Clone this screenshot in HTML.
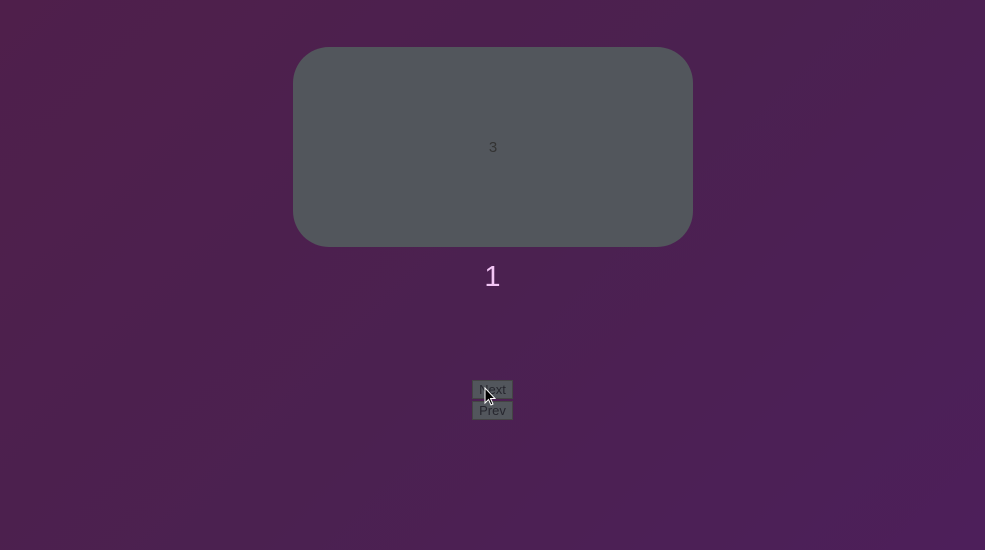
<!DOCTYPE html>
<html><head><style>
html,body{margin:0;width:985px;height:550px;overflow:hidden}
body{background:linear-gradient(135deg,#4f1f4b 0%,#4b2150 50%,#4d1f5a 100%);font-family:"Liberation Sans",sans-serif;position:relative}
.card{position:absolute;left:293px;top:47px;width:400px;height:200px;border-radius:36px;background:#52565c;color:#333;font-size:15px;display:flex;align-items:center;justify-content:center}
.num{position:absolute;left:0;width:985px;top:261px;text-align:center;color:#f3c6f5;font-size:29px}
.btn{position:absolute;left:472px;width:41px;height:19px;background:#52565c;border:1px solid #444;box-sizing:border-box;color:#26262e;font-size:13px;text-align:center;line-height:18px}
</style></head><body>
<div class="card">3</div>
<div class="num">1</div>
<div class="btn" style="top:380px">Next</div>
<div class="btn" style="top:401px">Prev</div>
<svg style="position:absolute;left:484px;top:387px" width="12" height="20" viewBox="0 0 12 20"><path d="M1 1 L1 16 L4.5 12.5 L7 18 L9 17 L6.5 11.5 L11 11.5 Z" fill="#000" stroke="#fff" stroke-width="1"/></svg>
</body></html>
